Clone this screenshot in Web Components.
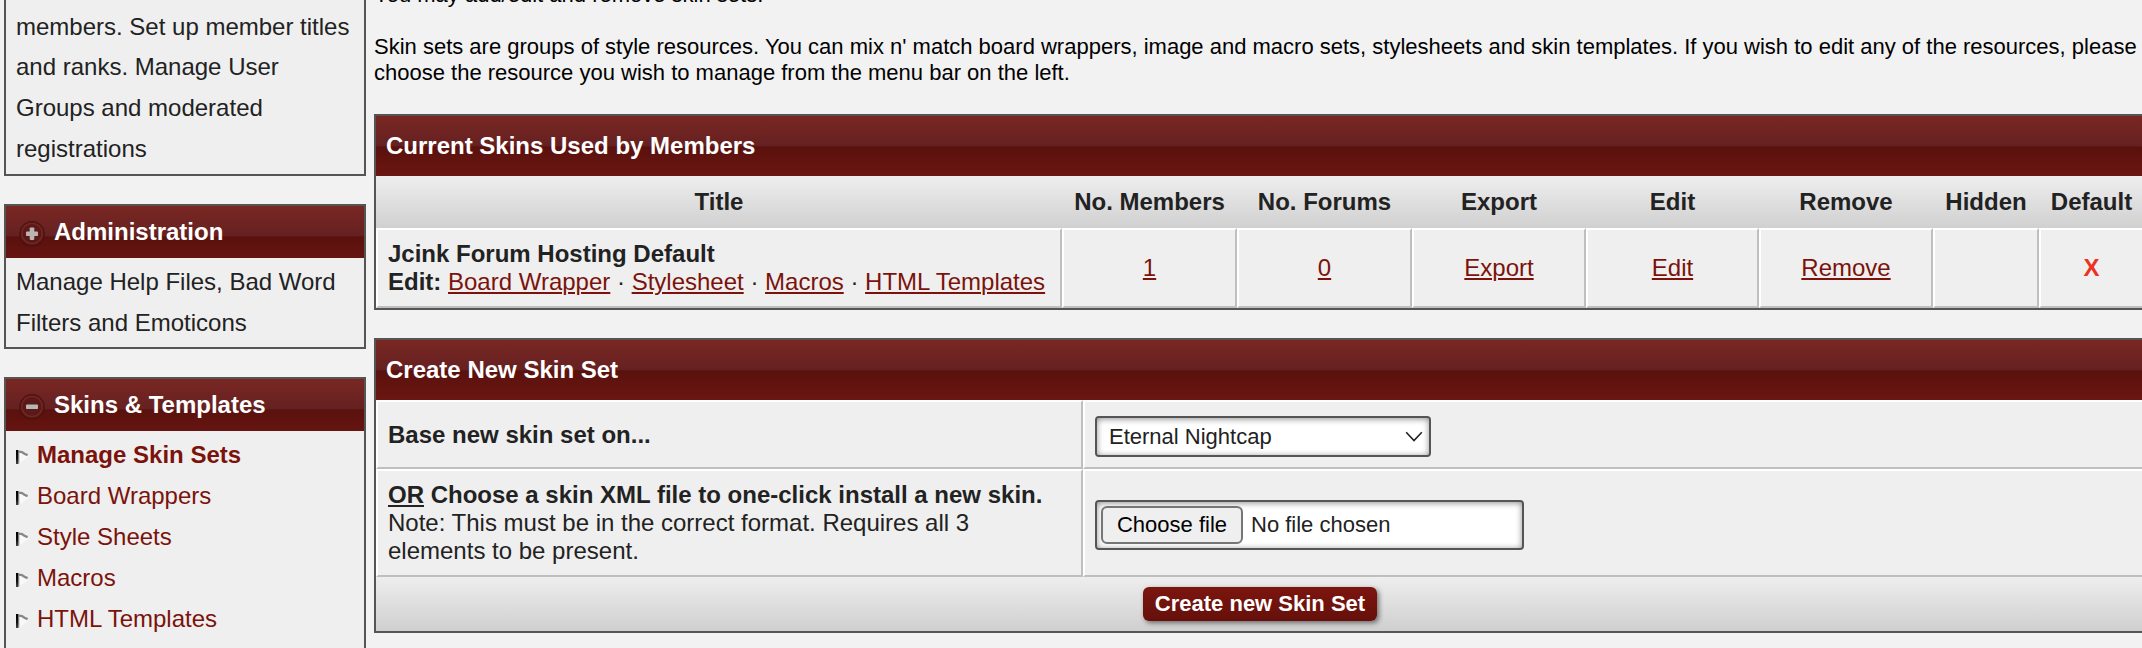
<!DOCTYPE html>
<html lang="en">
<head>
<meta charset="utf-8">
<title>Skin Sets</title>
<style>
html, body { margin: 0; height: 648px; overflow: hidden; background: #f2f2f2; }
body { font-family: "Liberation Sans", Arial, sans-serif; font-size: 24px; color: #222; }
</style>
</head>
<body>
<admin-page></admin-page>
<script>
const define = (name, html) => {
  const t = document.createElement('template');
  t.innerHTML = html;
  customElements.define(name, class extends HTMLElement {
    constructor() {
      super();
      this.attachShadow({ mode: 'open' }).append(t.content.cloneNode(true));
    }
  });
};

/* Round expand / collapse button in sidebar headers */
define('toggle-icon', `
<style>
:host { display: block; width: 30px; height: 30px; }
svg { display: block; }
.v { display: none; }
:host([plus]) .v { display: block; }
</style>
<svg width="30" height="30" viewBox="0 0 30 30">
  <circle cx="15" cy="15.1" r="13" fill="#3c0d0c" opacity=".35"/>
  <circle cx="15" cy="14.5" r="11.8" fill="#5e1513" stroke="#4d1614" stroke-width="1.4"/>
  <circle cx="15" cy="14.5" r="10.2" fill="none" stroke="#702523" stroke-width="1.8"/>
  <circle cx="15" cy="14.5" r="8" fill="#581b19"/>
  <rect x="9" y="12.4" width="12" height="4.6" rx=".8" fill="#bdb3b3"/>
  <rect class="v" x="12.7" y="8.5" width="4.6" height="12.4" rx=".8" fill="#bdb3b3"/>
</svg>`);

define('flag-icon', `
<style>:host { display: block; width: 14px; height: 15px; } svg { display: block; }</style>
<svg width="14" height="15" viewBox="0 0 14 15">
  <defs><linearGradient id="g" x1="0" y1="0" x2="0" y2="1"><stop offset="0" stop-color="#000"/><stop offset=".6" stop-color="#111"/><stop offset="1" stop-color="#444"/></linearGradient></defs>
  <path d="M2 1.5L13 6.5L3 14Z" fill="#f8f8f8"/>
  <path d="M2.6 1.6L6 2.1L8.4 3.8L11.6 5.2" fill="none" stroke="#888" stroke-width="2.4"/>
  <path d="M2.8 3.2V13.6" stroke="#c4c4c4" stroke-width="1.6"/>
  <rect x="0" y="0" width="2.4" height="14" fill="url(#g)"/>
</svg>`);

define('side-box', `
<style>
:host { display: block; box-sizing: border-box; border: 2px solid #555; background: #efefef; margin-bottom: 28px; }
header { display: flex; align-items: center; height: 52px; box-sizing: border-box; padding-left: 11px; gap: 7px; color: #fff; font-weight: bold;
  background: linear-gradient(#7a2723 0, #652121 29.5px, #5a110d 31px, #6b1612 60px) 0 0 / 100% 60px no-repeat; }
.body { padding: var(--body-top, 4px) 10px 4px; line-height: 40.8px; }
slot[name=icon] { display: block; }
.icon { padding-top: 4px; }
.t { line-height: 28px; }
:host([headless]) header { display: none; }
</style>
<header><div class="icon"><slot name="icon"></slot></div><div class="t"><slot name="title"></slot></div></header>
<div class="body"><slot></slot></div>`);

define('side-link', `
<style>
:host { display: flex; align-items: center; gap: 7px; height: 41px; line-height: 41px; color: #7b130c; white-space: nowrap; }
:host([current]) { font-weight: bold; }
flag-icon { margin-top: 6px; }
</style>
<flag-icon></flag-icon><span><slot></slot></span>`);

define('panel-box', `
<style>
:host { display: block; box-sizing: border-box; width: 1772px; border: 2px solid #555; background: #efefef; }
header { height: 60px; box-sizing: border-box; padding: 16px 10px 0 10px; line-height: 28px; color: #fff; font-weight: bold;
  background: linear-gradient(#7a2723 0, #652121 29.5px, #5a110d 31px, #6b1612 60px); }
</style>
<header><slot name="title"></slot></header><slot></slot>`);

define('table-cell', `
<style>
:host { display: flex; flex-direction: column; justify-content: center; box-sizing: border-box; padding: 0 10px; line-height: 28px; white-space: nowrap;
  border: 2px solid #bfbfbf; border-top-color: #fff; border-left-color: #fff; }
:host([center]) { align-items: center; }
:host([field]) { padding-top: 4px; }
:host([head]) { border: 0; font-weight: bold; padding: 0; align-items: center; }
</style>
<div><slot></slot></div>`);

define('text-link', `
<style>:host { display: inline; color: #7b130c; text-decoration: underline; text-decoration-thickness: 2px; text-underline-offset: 2px; }</style><slot></slot>`);

define('select-box', `
<style>
:host { display: flex; align-items: center; justify-content: space-between; box-sizing: border-box; width: 336px; height: 41px; padding: 0 6px 0 12px;
  border: 2px solid #555; border-radius: 4px; background: #fff; box-shadow: inset 0 1px 6px rgba(0,0,0,.45); font-size: 22px; line-height: 26px; color: #222; }
</style>
<span><slot></slot></span>
<svg width="18" height="12" viewBox="0 0 18 12"><path d="M1.2 1.2L9 9.6L16.8 1.2" fill="none" stroke="#222" stroke-width="1.6"/></svg>`);

define('file-box', `
<style>
:host { display: flex; align-items: center; gap: 8px; box-sizing: border-box; width: 429px; height: 50px; padding: 0 4px;
  border: 2px solid #555; border-radius: 4px; background: #fff; box-shadow: inset 0 1px 6px rgba(0,0,0,.45); font-size: 22px; line-height: 26px; color: #222; }
.b { display: flex; align-items: center; justify-content: center; box-sizing: border-box; width: 142px; height: 38px; border: 2px solid #767676; border-radius: 6px; background: #efefef; color: #000; }
</style>
<div class="b"><span>Choose file</span></div><span><slot></slot></span>`);

define('submit-button', `
<style>
:host { display: flex; align-items: center; justify-content: center; width: 234px; height: 34px; border-radius: 6px; color: #fff; font-weight: bold; font-size: 22px; line-height: 26px;
  background: linear-gradient(#7c150f, #66100b); box-shadow: 2px 2px 5px rgba(0,0,0,.5); }
span { padding-bottom: 1px; }
</style><span><slot></slot></span>`);

define('admin-page', `
<style>
:host { display: grid; grid-template-columns: 362px 1772px; column-gap: 8px; padding-left: 4px; height: 648px; overflow: hidden; }
.first { margin-top: -2px; height: 178px; border-top: 0; display: flex; flex-direction: column; justify-content: flex-end; }
.first span { display: block; padding-bottom: .25px; }
.mid { height: 145px; }
.last { height: 300px; --body-top: 3px; }
.intro { margin-top: -18px; height: 132px; font-size: 22px; line-height: 26px; color: #000; white-space: nowrap; }
.head, .row { display: grid; grid-template-columns: 686px 175px 175px 174px 173px 174px 106px 105px; }
.head { height: 52px; background: linear-gradient(#eee, #d0d0d0); }
.row { height: 80px; }
.gap { height: 28px; }
.form { display: grid; grid-template-columns: 707px 1061px; grid-template-rows: 69px 108px; }
.foot { display: flex; justify-content: center; align-items: center; height: 54px; background: linear-gradient(#eee, #cfcfcf); }
.x { color: #ea3323; font-weight: bold; }
u { text-decoration-thickness: 2px; text-underline-offset: 2px; }
</style>
<aside>
  <side-box class="first" headless><span>members. Set up member titles and ranks. Manage User Groups and moderated registrations</span></side-box>
  <side-box class="mid"><toggle-icon slot="icon" plus></toggle-icon><span slot="title">Administration</span>Manage Help Files, Bad Word Filters and Emoticons</side-box>
  <side-box class="last"><toggle-icon slot="icon"></toggle-icon><span slot="title">Skins &amp; Templates</span>
    <side-link current>Manage Skin Sets</side-link><side-link>Board Wrappers</side-link><side-link>Style Sheets</side-link><side-link>Macros</side-link><side-link>HTML Templates</side-link>
  </side-box>
</aside>
<main>
  <div class="intro">You may add/edit and remove skin sets.<br><br>Skin sets are groups of style resources. You can mix n' match board wrappers, image and macro sets, stylesheets and skin templates. If you wish to edit any of the resources, please<br>choose the resource you wish to manage from the menu bar on the left.</div>
  <panel-box><span slot="title">Current Skins Used by Members</span>
    <div class="head"><table-cell head>Title</table-cell><table-cell head>No. Members</table-cell><table-cell head>No. Forums</table-cell><table-cell head>Export</table-cell><table-cell head>Edit</table-cell><table-cell head>Remove</table-cell><table-cell head>Hidden</table-cell><table-cell head>Default</table-cell></div>
    <div class="row">
      <table-cell><b>Jcink Forum Hosting Default</b><br><b>Edit:</b> <text-link>Board Wrapper</text-link> · <text-link>Stylesheet</text-link> · <text-link>Macros</text-link> · <text-link>HTML Templates</text-link></table-cell>
      <table-cell center><text-link>1</text-link></table-cell><table-cell center><text-link>0</text-link></table-cell><table-cell center><text-link>Export</text-link></table-cell><table-cell center><text-link>Edit</text-link></table-cell><table-cell center><text-link>Remove</text-link></table-cell><table-cell center></table-cell><table-cell center><span class="x">X</span></table-cell>
    </div>
  </panel-box>
  <div class="gap"></div>
  <panel-box><span slot="title">Create New Skin Set</span>
    <div class="form">
      <table-cell><b>Base new skin set on...</b></table-cell>
      <table-cell field><select-box>Eternal Nightcap</select-box></table-cell>
      <table-cell><b><u>OR</u> Choose a skin XML file to one-click install a new skin.</b><br>Note: This must be in the correct format. Requires all 3<br>elements to be present.</table-cell>
      <table-cell field><file-box>No file chosen</file-box></table-cell>
    </div>
    <div class="foot"><submit-button>Create new Skin Set</submit-button></div>
  </panel-box>
</main>`);
</script>
</body>
</html>
